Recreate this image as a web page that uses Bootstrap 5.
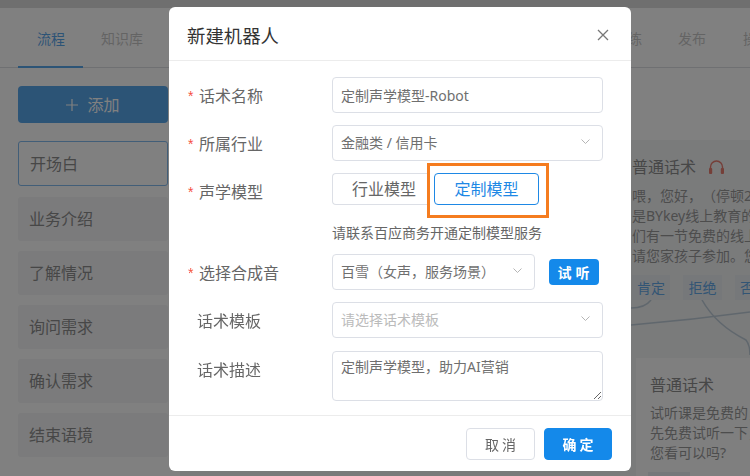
<!DOCTYPE html>
<html lang="zh"><head><meta charset="utf-8">
<link href="https://cdn.jsdelivr.net/npm/bootstrap@5.3.0/dist/css/bootstrap.min.css" rel="stylesheet">
<style>
html,body{height:476px;overflow:hidden}
body{font-family:"Noto Sans","Noto Sans CJK SC",sans-serif;color:#444;background:#fff;text-spacing-trim:space-all}
.app-top{height:8px;background:#d1d1d1}
.app-tabs{height:60px;border-bottom:1px solid #d0d5d8;position:relative}
.app-tab{font-size:14px;line-height:20px;color:#b5b5b5;position:absolute;top:21px;white-space:nowrap}
.tab-a{left:37px;color:#1e88e5}
.tab-b{left:101px}
.tab-c{left:614px}
.tab-d{left:678px}
.tab-e{left:743px}
.tab-line{position:absolute;left:18px;width:65px;bottom:-1px;height:2px;background:#1e88e5}
.app-side{width:150px;margin:18px 0 0 18px}
.add-btn{height:37px;width:150px;background:#1e88e5;color:#fff;font-size:16px;border-radius:4px;display:flex;align-items:center;justify-content:center;gap:9px;margin-bottom:18px;padding-top:1px}
.side-item{height:44px;background:#f0f1f3;border-radius:3px;font-size:16px;color:#666;padding:0 11px;display:flex;align-items:center;margin-bottom:10px}
.side-on{height:45px;background:#fff;border:1px solid #5aa3e8;margin-bottom:11px}
.app-canvas{position:absolute;left:180px;top:140px;right:0;bottom:0;background:#eef0f2}
.node{position:absolute;color:#777;font-size:14px;line-height:20px;white-space:nowrap}
.node-one{left:632px;top:151px;width:118px;height:150px;padding-top:4px;overflow:hidden}
.node-two{left:636px;top:358px;width:114px;height:118px;padding:15px 0 0 14px;background:#fbfbfc;overflow:hidden}
.node-title{font-size:16px;color:#666;line-height:24px;margin-bottom:7px}
.node-two .node-title{margin-bottom:6px}
.chip{position:absolute;top:124px;width:38px;height:25px;background:#e4e9ef;color:#2f8ce0;text-align:center;line-height:26px}
.chip-a{left:0}.chip-b{left:51px;width:39px}.chip-c{left:103px;text-align:left;padding-left:5px;width:20px}
.chip-d{position:absolute;left:12px;top:114px;width:42px;height:6px;background:#e4e9ef}
.wires{position:absolute;left:631px;top:300px}
.veil{position:fixed;inset:0;background:rgba(52,52,52,.627)}
.dlg{position:absolute;left:169px;top:7px;width:462px;height:464px;border:0;border-radius:6px;background:#fff}
.dlg-head{height:54px;padding:3px 18px 0;border-bottom:1px solid #ececec}
.dlg-title{font-size:18.4px;color:#333;line-height:27px}
.dlg-x{width:12px;height:12px;margin-right:4px}
.dlg-body{padding:16px 0 0 19px;height:354px}
.f-row{display:flex;align-items:flex-start}
.f-lab{width:144px;font-size:16px;line-height:36px;height:36px;padding-top:1px;color:#666;white-space:nowrap;padding-left:9px;position:relative}
.f-lab.must{padding-left:11px}
.f-lab.must::before{content:"*";font-family:"Liberation Sans",sans-serif;color:#f5503f;position:absolute;left:0;top:1px;font-size:14px}
.f-ctl{height:36px;width:271px;border:1px solid #dcdfe6;border-radius:4px;padding:0 12px 0 8px;font-size:14px;line-height:34px;color:#6f6f6f;box-shadow:none;display:flex;align-items:center;justify-content:space-between;background:#fff}
.f-ctl:focus{border-color:#dcdfe6;box-shadow:none}
.f-short{width:203px}
.f-ghost{color:#bbb}
.caret{width:9px;height:6px;flex:none;margin-bottom:2px}
.seg{height:32px;width:95px;border:1px solid #dcdfe6;border-radius:4px 0 0 4px;border-right:0;font-size:16px;line-height:30px;text-align:center;color:#666;padding-left:8px}
.seg-on{width:105px;margin-left:7px;border:1px solid #1e88e5;border-radius:4px;color:#1e88e5;padding:0;position:relative}
.mark-box{position:absolute;left:-8px;top:-11px;width:122px;height:55px;border:3px solid #f57c1f;pointer-events:none}
.hint{font-size:14px;line-height:20px;color:#666;margin:14px 0 11px 144px;white-space:nowrap}
.try{width:50px;height:26px;margin-left:14px;margin-top:5px;padding:0 0 0 3px;background:#1489ea;border:0;border-radius:4px;color:#fff;font-size:14px;font-weight:700;letter-spacing:4px}
.area{height:50px;width:271px;border:1px solid #dcdfe6;border-radius:4px;padding:4px 8px;font-size:14px;line-height:22px;color:#6f6f6f;box-shadow:none;resize:vertical;min-height:0}
.area:focus{border-color:#dcdfe6;box-shadow:none}
.gap-12{margin-bottom:12px}
.gap-13{margin-bottom:13px}
.dlg-foot{border-top:1px solid #ececec;height:56px;padding:12px 19px 0 0;gap:9px}
.act{height:32px;width:69px;padding:0 0 0 3px;border-radius:4px;font-size:14px;letter-spacing:3px;border:1px solid #dcdfe6;color:#666;background:#fff}
.act-go{width:68px;background:#1489ea;border-color:#1489ea;color:#fff;font-weight:700}
</style></head>
<body>
<div class="app-top"></div>
<div class="app-tabs">
<span class="app-tab tab-a">流程</span><span class="app-tab tab-b">知识库</span><span class="app-tab tab-c">训练</span><span class="app-tab tab-d">发布</span><span class="app-tab tab-e">操</span><span class="tab-line"></span>
</div>
<div class="app-side">
<div class="add-btn"><svg width="12" height="12" viewBox="0 0 12 12"><path d="M6 0v12M0 6h12" stroke="#fff" stroke-width="1.2"/></svg><span>添加</span></div>
<div class="side-item side-on">开场白</div>
<div class="side-item">业务介绍</div>
<div class="side-item">了解情况</div>
<div class="side-item">询问需求</div>
<div class="side-item">确认需求</div>
<div class="side-item">结束语境</div>
</div>
<div class="app-canvas"></div>
<div class="node node-one">
<div class="node-title d-flex align-items-center gap-2"><span>普通话术</span><svg class="ms-1" width="17" height="16" viewBox="0 0 17 16" fill="none"><path d="M2.5 11V8a6 6 0 0 1 12 0v3" stroke="#e2503f" stroke-width="1.4"/><rect x="1" y="9" width="3.2" height="6" rx="1" fill="#e2503f"/><rect x="12.8" y="9" width="3.2" height="6" rx="1" fill="#e2503f"/></svg></div>
<div>喂，您好，（停顿2</div><div>是BYkey线上教育的</div><div>们有一节免费的线上</div><div>请您家孩子参加。您</div>
<span class="chip chip-a">肯定</span><span class="chip chip-b">拒绝</span><span class="chip chip-c">否</span>
</div>
<svg class="wires" width="119" height="60" fill="none" stroke="#a9bccb" stroke-width="1.5"><path d="M0 8Q14 8 20 0"/><path d="M0 25Q60 20 119 12"/><path d="M71 0Q85 25 115 40Q119 45 119 55"/></svg>
<div class="node node-two">
<div class="node-title">普通话术</div>
<div>试听课是免费的，</div><div>先免费试听一下，</div><div>您看可以吗?</div>
<span class="chip-d"></span>
</div>
<div class="veil"></div>
<div class="modal-content dlg">
<div class="modal-header dlg-head"><span class="dlg-title">新建机器人</span><svg class="dlg-x ms-auto" viewBox="0 0 12 12"><path d="M1 1l10 10M11 1L1 11" stroke="#777" stroke-width="1.3"/></svg></div>
<div class="dlg-body">
<div class="f-row gap-12"><div class="f-lab must">话术名称</div><input class="form-control f-ctl" value="定制声学模型-Robot"></div>
<div class="f-row gap-12"><div class="f-lab must">所属行业</div><div class="f-ctl">金融类 / 信用卡<svg class="caret" viewBox="0 0 9 6" fill="none"><path d="M.5.5 4.5 4.5 8.5.5" stroke="#b5b5b5"/></svg></div></div>
<div class="f-row"><div class="f-lab must">声学模型</div><div class="seg">行业模型</div><div class="seg seg-on">定制模型<span class="mark-box"></span></div></div>
<div class="hint">请联系百应商务开通定制模型服务</div>
<div class="f-row gap-12"><div class="f-lab must">选择合成音</div><div class="f-ctl f-short">百雪（女声，服务场景）<svg class="caret" viewBox="0 0 9 6" fill="none"><path d="M.5.5 4.5 4.5 8.5.5" stroke="#b5b5b5"/></svg></div><button class="btn try">试听</button></div>
<div class="f-row gap-13"><div class="f-lab">话术模板</div><div class="f-ctl f-ghost">请选择话术模板<svg class="caret" viewBox="0 0 9 6" fill="none"><path d="M.5.5 4.5 4.5 8.5.5" stroke="#b5b5b5"/></svg></div></div>
<div class="f-row"><div class="f-lab">话术描述</div><textarea class="form-control area">定制声学模型，助力AI营销</textarea></div>
</div>
<div class="modal-footer dlg-foot d-flex justify-content-end align-items-start"><button class="btn act m-0">取消</button><button class="btn act act-go m-0">确定</button></div>
</div>
</body></html>
